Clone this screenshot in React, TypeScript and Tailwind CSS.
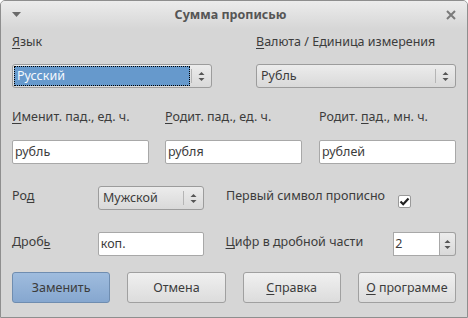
import React from 'react';

const font = { fontFamily: '"Noto Sans", "DejaVu Sans", sans-serif' };

function Arrows() {
  return (
    <svg width="7" height="11" viewBox="0 0 7 11" className="text-[#555]">
      <path d="M0.5 4 L3.5 1 L6.5 4 Z" fill="currentColor" />
      <path d="M0.5 7 L3.5 10 L6.5 7 Z" fill="currentColor" />
    </svg>
  );
}

function Combo({ value, width, selected }: { value: string; width: string; selected?: boolean }) {
  return (
    <div className={`flex h-[24px] ${width} items-stretch rounded-[3px] border border-[#9c9c9c] bg-gradient-to-b from-[#ececec] to-[#d9d9d9]`}>
      <div className="flex flex-1 items-center p-[1px]">
        {selected ? (
          <div className="flex h-full w-full items-center border border-dotted border-black bg-[#6699cc] pl-[2px] text-[#f4f8fc]">
            {value}
          </div>
        ) : (
          <span className="pl-[3px]">{value}</span>
        )}
      </div>
      <div className="my-[4px] w-px bg-[#b5b5b5]" />
      <div className="flex w-[19px] items-center justify-center">
        <Arrows />
      </div>
    </div>
  );
}

function Entry({ value, width }: { value: string; width: string }) {
  return (
    <div className={`flex h-[24px] ${width} items-center rounded-[2px] border border-[#a8a8a8] bg-white pl-[2px]`}>
      {value}
    </div>
  );
}

function Button({ children, primary }: { children: React.ReactNode; primary?: boolean }) {
  return (
    <div
      className={`flex h-[31px] w-[99px] items-center justify-center rounded-[3px] border ${
        primary
          ? 'border-[#6f8db0] bg-gradient-to-b from-[#9fbcde] to-[#86a7cf]'
          : 'border-[#a0a0a0] bg-gradient-to-b from-[#f0f0f0] to-[#dcdcdc]'
      }`}
    >
      <span>{children}</span>
    </div>
  );
}

export default function App() {
  return (
    <div
      style={font}
      className="flex h-[318px] w-[468px] flex-col overflow-hidden rounded-t-[5px] border border-[#8e8e8e] bg-[#d6d6d6] text-[12.5px] leading-[16px] text-[#3c3c3c]"
    >
      {/* title bar */}
      <div className="flex h-[28px] items-center bg-gradient-to-b from-[#ececec] to-[#d6d6d6] px-[11px]">
        <svg width="9" height="6" viewBox="0 0 9 6">
          <path d="M0 0 L9 0 L4.5 5 Z" fill="#6a6a6a" />
        </svg>
        <div className="flex-1 pr-[6px] text-center font-bold text-[#555]">Сумма прописью</div>
        <svg width="10" height="10" viewBox="0 0 10 10">
          <path d="M1 1 L9 9 M9 1 L1 9" stroke="#7a7a7a" strokeWidth="2" />
        </svg>
      </div>

      <div className="flex flex-col px-[11px]">
        {/* language / currency */}
        <div className="mt-[5px] flex gap-[44px]">
          <div className="flex w-[200px] flex-col gap-[14px]">
            <span><u className="underline-offset-2">Я</u>зык</span>
            <Combo value="Русский" width="w-[200px]" selected />
          </div>
          <div className="flex w-[200px] flex-col gap-[14px]">
            <span><u className="underline-offset-2">В</u>алюта / Единица измерения</span>
            <Combo value="Рубль" width="w-[200px]" />
          </div>
        </div>

        {/* cases */}
        <div className="mt-[21px] flex gap-[16px]">
          <div className="flex w-[137px] flex-col gap-[15px]">
            <span><u className="underline-offset-2">И</u>менит. пад., ед. ч.</span>
            <Entry value="рубль" width="w-[137px]" />
          </div>
          <div className="flex w-[137px] flex-col gap-[15px]">
            <span><u className="underline-offset-2">Р</u>одит. пад., ед. ч.</span>
            <Entry value="рубля" width="w-[137px]" />
          </div>
          <div className="ml-[1px] flex w-[137px] flex-col gap-[15px]">
            <span>Родит. <u className="underline-offset-2">п</u>ад., мн. ч.</span>
            <Entry value="рублей" width="w-[137px]" />
          </div>
        </div>

        {/* gender */}
        <div className="mt-[22px] flex h-[24px] items-center">
          <span className="mb-[4px] w-[86px]">Ро<u className="underline-offset-2">д</u></span>
          <Combo value="Мужской" width="w-[106px]" />
          <span className="mb-[4px] ml-[22px] w-[172px]">Первый символ прописно</span>
          <div className="mt-[6px] flex h-[13px] w-[13px] items-center justify-center rounded-[2px] border border-[#9a9a9a] bg-white">
            <svg width="11" height="9" viewBox="0 0 11 9">
              <path d="M1.5 4.5 L4.2 7.2 L9.5 1.5" fill="none" stroke="#222" strokeWidth="2.2" />
            </svg>
          </div>
        </div>

        {/* fraction */}
        <div className="mt-[22px] flex h-[24px] items-center">
          <span className="mb-[4px] w-[86px]">Дроб<u className="underline-offset-2">ь</u></span>
          <Entry value="коп." width="w-[106px]" />
          <span className="mb-[4px] ml-[22px] w-[168px]"><u className="underline-offset-2">Ц</u>ифр в дробной части</span>
          <div className="flex h-[24px] w-[63px] items-stretch">
            <div className="flex flex-1 items-center border border-[#a8a8a8] bg-white pl-[1px]">2</div>
            <div className="flex w-[16px] items-center justify-center rounded-r-[3px] border border-l-0 border-[#a0a0a0] bg-gradient-to-b from-[#ececec] to-[#d9d9d9]">
              <Arrows />
            </div>
          </div>
        </div>

        {/* buttons */}
        <div className="mt-[16px] flex gap-[17px]">
          <Button primary>Заменить</Button>
          <Button>Отмена</Button>
          <Button><u className="underline-offset-2">С</u>правка</Button>
          <Button><u className="underline-offset-2">О</u> программе</Button>
        </div>
      </div>
    </div>
  );
}
